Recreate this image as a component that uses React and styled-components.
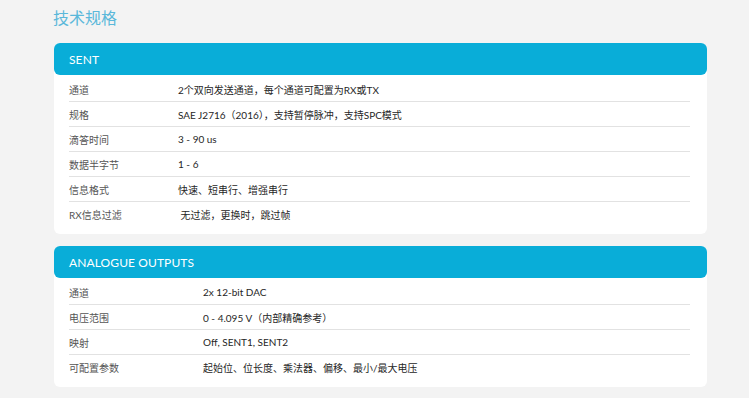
import React from 'react';
import styled, { createGlobalStyle } from 'styled-components';

const GlobalStyle = createGlobalStyle`
  html, body {
    margin: 0;
    padding: 0;
    background: #f3f3f3;
  }
  body {
    font-family: "Lato", "Noto Sans CJK SC", sans-serif;
  }
`;

const Page = styled.div`
  width: 653px;
  padding: 5px 0 10px 54px;
`;

const Title = styled.h1`
  margin: 0 0 14px -1px;
  font-family: "Noto Sans CJK SC", sans-serif;
  font-size: 16px;
  line-height: 24px;
  font-weight: 400;
  color: #5ab8da;
`;

const Card = styled.section`
  background: #fff;
  border-radius: 6px;
  padding-bottom: 7px;
  margin-bottom: 12px;
`;

const CardHeader = styled.div`
  height: 32px;
  display: flex;
  align-items: center;
  padding-left: 15px;
  background: #09add8;
  border-radius: 6px;
  color: #fff;
  font-size: 12px;
  font-weight: 400;
  letter-spacing: 0.1px;
`;

const Rows = styled.div`
  padding-top: 2px;
`;

const Row = styled.div`
  display: grid;
  grid-template-columns: ${(p) => p.$labelWidth}px 1fr;
  align-items: center;
  height: 25px;
  margin: 0 17px 0 15px;
  font-size: 10px;
  border-bottom: 1px solid ${(p) => (p.$last ? 'transparent' : '#e2e2e2')};
  box-sizing: border-box;
`;

const Label = styled.span`
  color: #555;
`;

const Value = styled.span`
  color: #262626;
  white-space: pre;
`;

const sections = [
  {
    title: 'SENT',
    labelWidth: 109,
    rows: [
      ['通道', '2个双向发送通道，每个通道可配置为RX或TX'],
      ['规格', 'SAE J2716（2016），支持暂停脉冲，支持SPC模式'],
      ['滴答时间', '3 - 90 us'],
      ['数据半字节', '1 - 6'],
      ['信息格式', '快速、短串行、增强串行'],
      ['RX信息过滤', ' 无过滤，更换时，跳过帧'],
    ],
  },
  {
    title: 'ANALOGUE OUTPUTS',
    labelWidth: 134,
    rows: [
      ['通道', '2x 12-bit DAC'],
      ['电压范围', '0 - 4.095 V（内部精确参考）'],
      ['映射', 'Off, SENT1, SENT2'],
      ['可配置参数', '起始位、位长度、乘法器、偏移、最小/最大电压'],
    ],
  },
];

export default function App() {
  return (
    <Page>
      <GlobalStyle />
      <Title>技术规格</Title>
      {sections.map((s) => (
        <Card key={s.title}>
          <CardHeader>{s.title}</CardHeader>
          <Rows>
            {s.rows.map(([label, value], i) => (
              <Row key={label} $labelWidth={s.labelWidth} $last={i === s.rows.length - 1}>
                <Label>{label}</Label>
                <Value>{value}</Value>
              </Row>
            ))}
          </Rows>
        </Card>
      ))}
    </Page>
  );
}
